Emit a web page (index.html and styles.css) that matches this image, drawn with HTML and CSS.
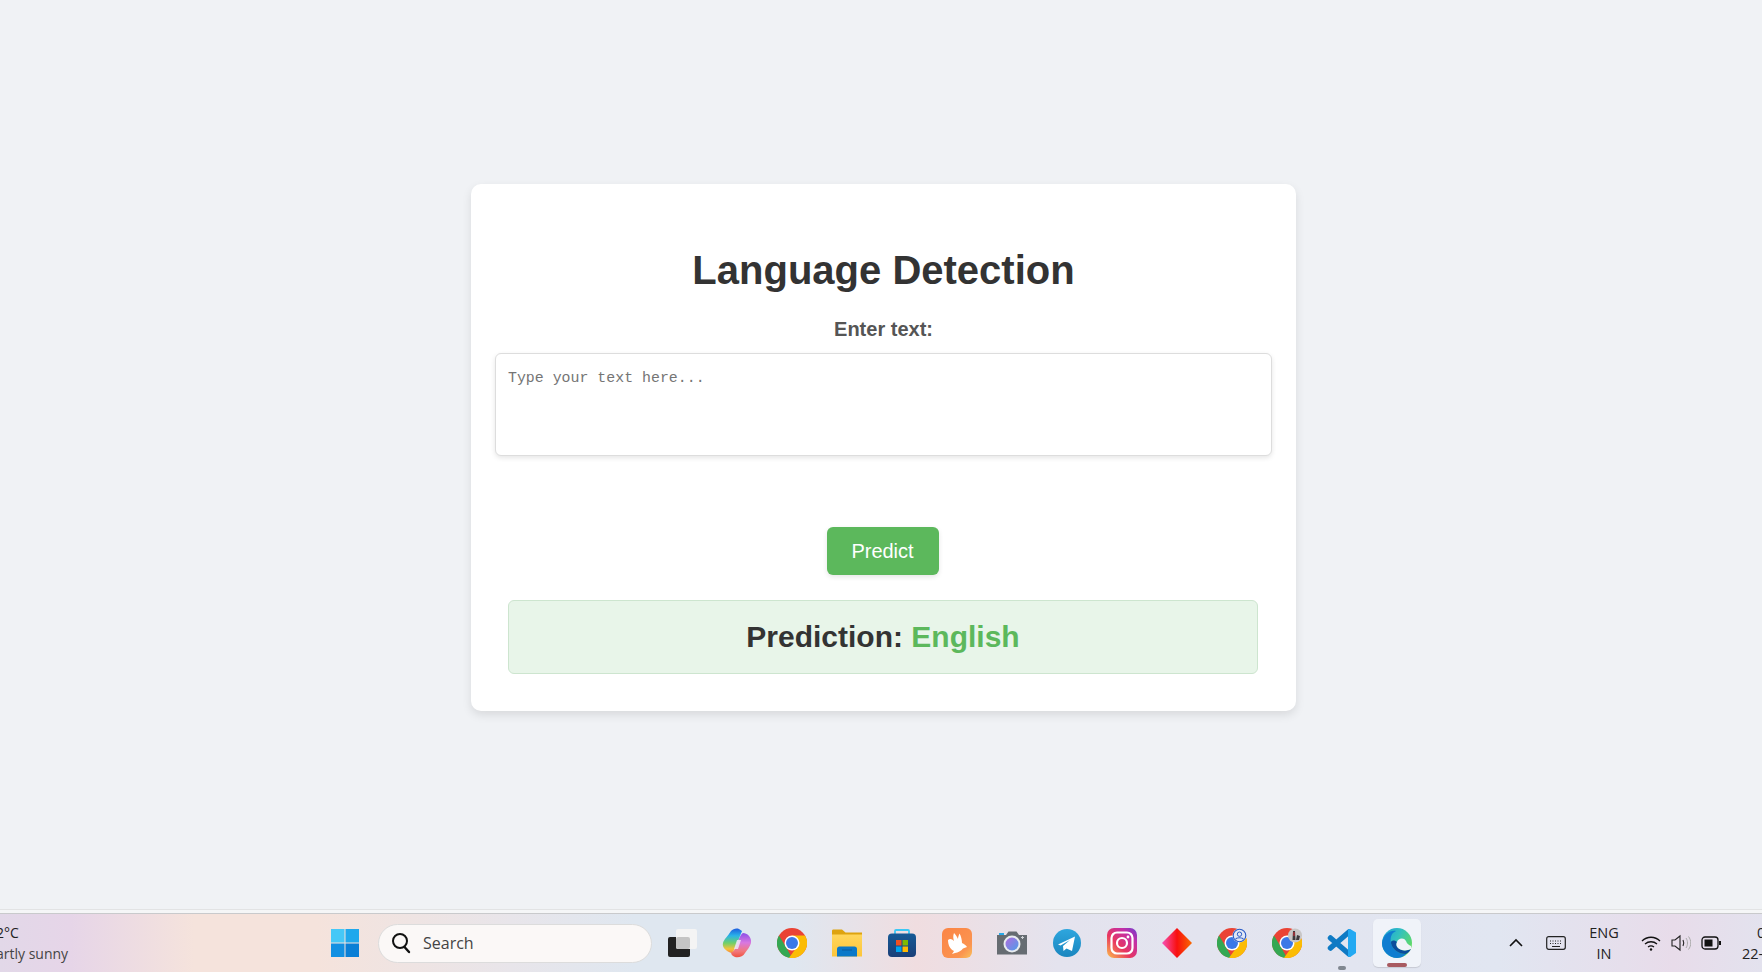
FILE: index.html
```html
<!DOCTYPE html>
<html lang="en">
<head>
<meta charset="utf-8">
<title>Language Detection</title>
<link rel="stylesheet" href="styles.css">
</head>
<body>
<svg class="defs" width="0" height="0"><defs>
  <g id="chrome"><circle cx="15" cy="15" r="15" fill="#ea4335"/><path fill="#34a853" d="M15 30A15 15 0 0 1 2 7.500L9.500 20z"/><path fill="#fbbc04" d="M12 29.700A15 15 0 0 0 28 7.500H15l6 10z"/><circle cx="15" cy="15" r="7.500" fill="#fff"/><circle cx="15" cy="15" r="6" fill="#3b78e7"/></g>
  <linearGradient id="cp1" x1="0" y1="0" x2="0" y2="1"><stop offset="0" stop-color="#1c5fe0"/><stop offset=".3" stop-color="#2ab4e8"/><stop offset=".6" stop-color="#6fd06a"/><stop offset=".85" stop-color="#f6c23a"/><stop offset="1" stop-color="#f58a3c"/></linearGradient>
  <linearGradient id="cp2" x1="0" y1="0" x2="0" y2="1"><stop offset="0" stop-color="#8a4fe8"/><stop offset=".4" stop-color="#d878e0"/><stop offset=".75" stop-color="#f2787a"/><stop offset="1" stop-color="#ef4f3f"/></linearGradient>
  <linearGradient id="bd" x1="0" y1="0" x2="1" y2="1"><stop offset="0" stop-color="#fb8445"/><stop offset=".75" stop-color="#fb9450"/><stop offset="1" stop-color="#f9c25c"/></linearGradient>
  <linearGradient id="cam" x1="0" y1="0" x2="1" y2="1"><stop offset="0" stop-color="#b06de0"/><stop offset="1" stop-color="#4f9ce8"/></linearGradient>
  <linearGradient id="tg" x1="0" y1="0" x2="0" y2="1"><stop offset="0" stop-color="#2ea6de"/><stop offset="1" stop-color="#1a86bf"/></linearGradient>
  <linearGradient id="ig" x1="0" y1="1" x2="1" y2="0"><stop offset="0" stop-color="#fdc04a"/><stop offset=".4" stop-color="#e8365f"/><stop offset=".75" stop-color="#c22fa8"/><stop offset="1" stop-color="#6a3fd0"/></linearGradient>
  <linearGradient id="dm" x1="0" y1="0" x2="1" y2="0"><stop offset="0" stop-color="#f652b8"/><stop offset=".5" stop-color="#f8100f"/><stop offset="1" stop-color="#f96a00"/></linearGradient>
  <linearGradient id="eg" x1="0" y1="0" x2="1" y2=".6"><stop offset="0" stop-color="#1b9ed8"/><stop offset=".5" stop-color="#32c0c0"/><stop offset="1" stop-color="#62dc62"/></linearGradient>
  <linearGradient id="st" x1="0" y1="0" x2="0" y2="1"><stop offset="0" stop-color="#155a96"/><stop offset="1" stop-color="#1a3f78"/></linearGradient>
  <linearGradient id="fd" x1="0" y1="0" x2="0" y2="1"><stop offset="0" stop-color="#ffd65c"/><stop offset="1" stop-color="#fcc53a"/></linearGradient>
</defs></svg>
<main class="page">
  <section class="card">
    <h1 class="title">Language Detection</h1>
    <label class="label" for="txt">Enter text:</label>
    <textarea class="input" id="txt" placeholder="Type your text here..."></textarea>
    <button class="predict">Predict</button>
    <div class="result"><h2 class="result-text">Prediction: <span class="lang">English</span></h2></div>
  </section>
</main>
<div class="strip"></div>
<footer class="taskbar">
  <div class="weather"><div class="temp">2°C</div><div class="cond">artly sunny</div></div>
  <div class="apps">
    <div class="cell"><svg width="30" height="30" viewBox="0 0 30 30"><path fill="#45c8f7" d="M1 1h13.500v13.500H1z"/><path fill="#1fa8ec" d="M15.500 1H29v13.500H15.500z"/><path fill="#1290e2" d="M1 15.500h13.500V29H1z"/><path fill="#0a7fd6" d="M15.500 15.500H29V29H15.500z"/></svg></div>
    <div class="search">
      <svg width="20" height="22" viewBox="0 0 20 22"><circle cx="9" cy="9" r="7" fill="none" stroke="#111" stroke-width="2"/><path d="M13.500 15l4.500 5" stroke="#111" stroke-width="2.400" stroke-linecap="round"/></svg>
      <span>Search</span>
    </div>
    <div class="cell"><svg width="32" height="30" viewBox="0 0 32 30"><rect x="2" y="9" width="22" height="20" rx="2" fill="#222"/><rect x="10" y="1" width="21" height="20" rx="2" fill="#f4f4f4"/><rect x="10" y="9" width="14" height="12" rx="2" fill="#c4c4c4"/></svg></div>
    <div class="cell"><svg width="30" height="30" viewBox="0 0 30 30"><path fill="url(#cp2)" d="M21 5c4 0 9 4 8 10-1 4-4 7-6 10-2 4-7 5-10 4-3-1-4-3-4-5 3 0 5-4 7-10 1-4 3-8 5-9z"/><path fill="url(#cp1)" d="M9 3c2-2 5-3 8-2l3 2-6 15c-2 5-4 8-7 6-4-2-7-5-6-9 1-4 5-7 8-12z"/><path fill="#efe6f6" opacity=".85" d="M15 12h4l-3 9h-4z"/></svg></div>
    <div class="cell"><svg width="30" height="30" viewBox="0 0 30 30"><use href="#chrome"/></svg></div>
    <div class="cell"><svg width="30" height="30" viewBox="0 0 30 30"><path fill="#dea30f" d="M0 3c0-1 .5-1.500 1.500-1.500H10l3.500 3H30V10H0z"/><path fill="url(#fd)" d="M0 6.500h30v22H0z"/><path fill="#0a78c8" d="M5 21c0-1.500 1-2.500 2.500-2.500h15c1.500 0 2.500 1 2.500 2.500v7.500H5z"/><path d="M10 22h10" stroke="#0a5a9c"/></svg></div>
    <div class="cell"><svg width="30" height="30" viewBox="0 0 30 30"><path d="M8 7V3c0-.6.500-1 1-1h12c.5 0 1 .4 1 1v4" fill="none" stroke="#3cc8f5" stroke-width="1.800"/><rect x="1" y="5.500" width="28" height="23.500" rx="4" fill="url(#st)"/><path fill="#f25022" d="M9 12h5.500v5.500H9z"/><path fill="#7fba00" d="M15.500 12H21v5.500h-5.500z"/><path fill="#00a4ef" d="M9 18.500h5.500V24H9z"/><path fill="#ffb900" d="M15.500 18.500H21V24h-5.500z"/></svg></div>
    <div class="cell"><svg width="30" height="30" viewBox="0 0 30 30"><rect width="30" height="30" rx="6" fill="url(#bd)"/><path fill="#fff" d="M6 12C8 10 10 11 12 13 11 10 11 8 12 5 14 7 15 9 16 11 16 9 17 7 17.500 5.500 19 8 20 12 20 15 22 16 24 17 25 19L21 20.500C19 23 16 24.500 13 25L10 26 12 23C8 21 6 17 6 12z"/></svg></div>
    <div class="cell"><svg width="30" height="30" viewBox="0 0 30 30"><path fill="#666c72" d="M0 7h9l2.500-3.500h8L22 7h8v19.500H0z"/><path fill="#28a8e8" d="M2 5h5v2H2z"/><circle cx="15" cy="16" r="8.500" fill="#e8ecf0"/><circle cx="15" cy="16" r="6.500" fill="url(#cam)"/><path d="M25.500 8v3M24 9.500h3" stroke="#cfd2d6"/></svg></div>
    <div class="cell"><svg width="30" height="30" viewBox="0 0 30 30"><circle cx="15" cy="15" r="14" fill="url(#tg)"/><path fill="#fff" d="M6 16.500l17-8-3 14.500-5.500-2.500-3 2.500-.5-5 7-6-9.500 5.500z"/></svg></div>
    <div class="cell"><svg width="30" height="30" viewBox="0 0 30 30"><rect width="30" height="30" rx="7" fill="url(#ig)"/><rect x="4.500" y="4.500" width="21" height="21" rx="5.500" fill="none" stroke="#fff" stroke-width="2.200"/><circle cx="15" cy="15" r="5" fill="none" stroke="#fff" stroke-width="2.200"/><circle cx="21" cy="9" r="1.400" fill="#fff"/></svg></div>
    <div class="cell"><svg width="30" height="30" viewBox="0 0 30 30"><path fill="url(#dm)" d="M15 0l15 15-15 15L0 15z"/></svg></div>
    <div class="cell"><svg width="30" height="30" viewBox="0 0 30 30"><use href="#chrome"/><circle cx="22.500" cy="7.500" r="7" fill="#dfe6f5"/><circle cx="22.500" cy="7.500" r="6.300" fill="none" stroke="#2b5bc5" stroke-width="1.100"/><circle cx="22.500" cy="6.200" r="2.200" fill="none" stroke="#2b5bc5"/><path d="M18.500 11.200c1-2 7-2 8 0" fill="none" stroke="#2b5bc5" stroke-width="1.100"/></svg></div>
    <div class="cell"><svg width="30" height="30" viewBox="0 0 30 30"><use href="#chrome"/><circle cx="23" cy="7.500" r="7" fill="#c8c6c6"/><path fill="#3d3a3d" d="M21 3h2l.5 9h-3zM25 7l3 1-1 4h-3z"/><path fill="#a8323a" d="M21.200 4h1.600v4h-1.600z"/></svg></div>
    <div class="cell"><svg width="30" height="30" viewBox="0 0 30 30"><path d="M3.500 10L22 26M3.500 20L22 4" fill="none" stroke="#0f7ac4" stroke-width="5.500" stroke-linecap="round"/><path fill="#23a9f2" d="M21 1.500c1-.7 2-.7 3 0l5 3v20.500l-5 3.500c-1 .7-2 .7-3 0z"/></svg><span class="dot"></span></div>
    <div class="cell active"><svg width="30" height="30" viewBox="0 0 30 30"><circle cx="15" cy="15" r="15" fill="url(#eg)"/><path fill="#0f7dd0" d="M0 15C1 7 8 2 14 3 9 5 8 10 9 15c1 6 7 11 15 11-3 3-6 4-9 4-8 0-15-7-15-15z"/><path fill="#0a4d9c" d="M9 15c1 6 7 11 15 11 2-1 4-3 5-5-4 2-10 2-13-1-2-2-2-4-1-6-3-2-6-2-6 1z"/><path fill="#f0f3f9" d="M15 14c1-4 7-5 9-1 1 3 3 4 5 5l0 3c-4 2-10 2-13-1-2-2-2-4-1-6z"/></svg><span class="bar"></span></div>
  </div>
  <div class="tray">
    <svg class="t-chev" width="16" height="10" viewBox="0 0 16 10"><path d="M2 8l6-6 6 6" fill="none" stroke="#111" stroke-width="1.600"/></svg>
    <svg class="t-kbd" width="20" height="16" viewBox="0 0 20 16"><rect x=".7" y="1.700" width="18.600" height="12.600" rx="2" fill="none" stroke="#222" stroke-width="1.200"/><path d="M4 6h12M4 8.500h12" stroke="#222" stroke-dasharray="1 1.500"/><path d="M6 11.500h8" stroke="#222"/></svg>
    <div class="ime"><div>ENG</div><div>IN</div></div>
    <svg class="t-wifi" width="20" height="16" viewBox="0 0 20 16"><path d="M1 6c5-5 13-5 18 0M4 9c3.500-3 8.500-3 12 0M7 12c2-1.500 4-1.500 6 0" fill="none" stroke="#111" stroke-width="1.300"/><circle cx="10" cy="14.500" r="1.200" fill="#111"/></svg>
    <svg class="t-vol" width="20" height="18" viewBox="0 0 20 18"><path d="M1 6h3l5-4v14l-5-4H1z" fill="none" stroke="#222" stroke-width="1.100"/><path d="M12 6c1 2 1 4 0 6" fill="none" stroke="#222" stroke-width="1.100"/><path d="M15 4c2 3 2 7 0 10M17.500 2.500c3 4 3 9 0 13" fill="none" stroke="#aaa"/></svg>
    <svg class="t-bat" width="20" height="14" viewBox="0 0 20 14"><rect x="1" y="1" width="16" height="12" rx="3" fill="none" stroke="#111" stroke-width="1.300"/><rect x="3.500" y="3.500" width="8" height="7" fill="#111"/><rect x="18" y="5" width="2" height="4" fill="#111"/></svg>
    <div class="clock"><div class="time">0</div><div>22-</div></div>
  </div>
</footer>
</body>
</html>
```

FILE: styles.css
```css
* { box-sizing: border-box; }
html, body { margin: 0; height: 100%; }
body {
  display: flex;
  flex-direction: column;
  height: 972px;
  overflow: hidden;
  background: #f0f2f5;
  font-family: "Liberation Sans", Arial, sans-serif;
}
.defs { position: absolute; }
.page {
  height: 910px;
  flex: none;
  display: flex;
  justify-content: center;
  padding: 184px 0 0 5px;
  border-bottom: 1px solid #e2e3e4;
}
.card {
  width: 825px;
  height: 527px;
  padding: 24px;
  background: #fff;
  border-radius: 10px;
  box-shadow: 0 4px 10px rgba(0, 0, 0, .1);
  display: flex;
  flex-direction: column;
  align-items: center;
}
.title {
  margin: 39px 0 0;
  font-size: 40px;
  line-height: 46px;
  font-weight: 700;
  color: #333;
}
.label {
  margin-top: 25px;
  font-size: 20px;
  line-height: 23px;
  font-weight: 700;
  color: #555;
}
.input {
  width: 777px;
  height: 103px;
  margin-top: 12px;
  padding: 15px 12px 12px;
  display: block;
  resize: none;
  background: #fff;
  border: 1px solid #ddd;
  border-radius: 6px;
  box-shadow: 0 2px 5px rgba(0, 0, 0, .1);
  font: 14.9px/18px "Liberation Mono", monospace;
}
.input::placeholder { color: #757575; opacity: 1; }
.predict {
  width: 112px;
  height: 48px;
  margin: 71px 2px 0 0;
  background: #5cb85c;
  border: 0;
  border-radius: 6px;
  box-shadow: 0 2px 5px rgba(0, 0, 0, .1);
  color: #fff;
  font: 20px "Liberation Sans", Arial, sans-serif;
}
.result {
  width: 750px;
  height: 74px;
  margin: 25px 1px 0 0;
  display: flex;
  align-items: center;
  justify-content: center;
  background: #e8f5e9;
  border: 1px solid #cde5cf;
  border-radius: 6px;
}
.result-text {
  margin: 0;
  font-size: 30px;
  font-weight: 700;
  color: #333;
}
.lang { color: #5cb85c; }

.strip { height: 3px; flex: none; background: #f5f6f7; }
.taskbar {
  position: relative;
  flex: 1;
  display: flex;
  align-items: center;
  overflow: hidden;
  border-top: 1px solid #c9cacc;
  background: linear-gradient(90deg, #e2d8e8 0, #e6d5e8 4%, #f5e3dc 11%, #f5e3dc 18%, #e8e5ea 29%, #dfe7f0 36%, #dfe7f0 45%, #f0dde0 52%, #e4e3ee 60%, #e1e6f1 85%, #e8dcea 95%, #e3e2ee 100%);
  font-family: "Open Sans", "Noto Sans", sans-serif;
  color: #222;
}
.weather {
  position: absolute;
  left: -4px;
  top: 8px;
  font-size: 14px;
  line-height: 21px;
}
.cond { color: #444; }
.apps {
  position: absolute;
  left: 317px;
  top: 0;
  height: 100%;
  display: flex;
  align-items: center;
}
.cell {
  position: relative;
  width: 55px;
  height: 100%;
  display: flex;
  align-items: center;
  justify-content: center;
}
.search {
  width: 274px;
  height: 39px;
  margin: 0 2px 0 6px;
  padding-left: 12px;
  display: flex;
  align-items: center;
  gap: 12px;
  background: #fbf8f7;
  border: 1px solid #dcdcdc;
  border-radius: 20px;
  font-size: 16px;
  color: #444;
}
.active {
  width: 48px;
  height: 48px;
  margin-left: 4px;
  background: #f0f3f9;
  border-radius: 5px;
  box-shadow: 0 1px 1px rgba(0, 0, 0, .12);
}
.dot {
  position: absolute;
  bottom: 2px;
  left: 24px;
  width: 8px;
  height: 4px;
  border-radius: 2px;
  background: #808790;
}
.bar {
  position: absolute;
  bottom: 0;
  left: 14px;
  width: 20px;
  height: 4px;
  border-radius: 2px;
  background: #a85a60;
}
.tray {
  position: absolute;
  left: 1500px;
  top: 0;
  right: 0;
  height: 100%;
  display: flex;
  align-items: center;
  font-size: 14.5px;
}
.t-chev { margin-left: 8px; flex: none; }
.t-kbd { margin-left: 22px; flex: none; }
.ime { margin-left: 20px; width: 36px; flex: none; text-align: center; line-height: 21px; }
.t-wifi { margin-left: 19px; flex: none; }
.t-vol { margin-left: 10px; flex: none; }
.t-bat { margin-left: 10px; flex: none; }
.clock { margin-left: 21px; flex: none; white-space: nowrap; line-height: 21px; }
.time { padding-left: 15px; }
```
